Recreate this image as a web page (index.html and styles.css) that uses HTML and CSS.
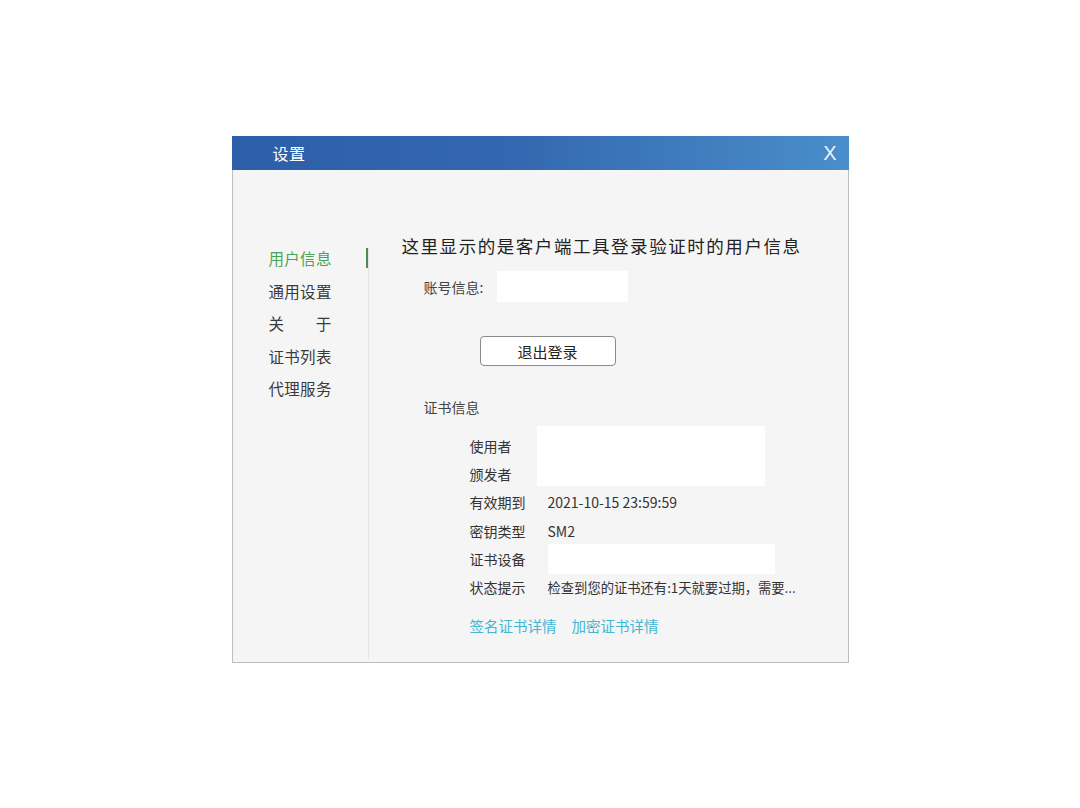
FILE: index.html
```html
<!DOCTYPE html>
<html lang="zh-CN">
<head>
<meta charset="utf-8">
<title>设置</title>
<link rel="stylesheet" href="styles.css">
</head>
<body>
<div class="dialog">
  <div class="titlebar">
    <span class="title">设置</span>
    <span class="close">X</span>
  </div>
  <div class="body">
    <aside class="side">
      <nav class="nav">
        <div class="nav-item active"><span>用户信息</span><i class="marker"></i></div>
        <div class="nav-item"><span>通用设置</span></div>
        <div class="nav-item"><span class="justify"><span>关</span><span>于</span></span></div>
        <div class="nav-item"><span>证书列表</span></div>
        <div class="nav-item"><span>代理服务</span></div>
      </nav>
    </aside>
    <main class="main">
      <h1 class="heading">这里显示的是客户端工具登录验证时的用户信息</h1>
      <div class="account">
        <span class="label">账号信息:</span>
        <span class="blank blank-account"></span>
      </div>
      <button class="btn">退出登录</button>
      <div class="section">证书信息</div>
      <div class="cert">
        <span class="k">使用者</span>
        <span class="blank blank-owner"></span>
        <span class="k">颁发者</span>
        <span class="k">有效期到</span><span class="v">2021-10-15 23:59:59</span>
        <span class="k">密钥类型</span><span class="v">SM2</span>
        <span class="k">证书设备</span><span class="v"><span class="blank blank-device"></span></span>
        <span class="k">状态提示</span><span class="v status">检查到您的证书还有:1天就要过期，需要...</span>
      </div>
      <div class="links">
        <a class="link">签名证书详情</a>
        <a class="link">加密证书详情</a>
      </div>
    </main>
  </div>
</div>
</body>
</html>
```

FILE: styles.css
```css
* { box-sizing: border-box; }
html, body { margin: 0; padding: 0; background: #ffffff; }
body {
  font-family: "Noto Sans CJK SC", "Noto Sans", sans-serif;
  color: #333;
}
.dialog {
  width: 617px;
  height: 527px;
  margin: 136px auto 0;
  display: flex;
  flex-direction: column;
}
.titlebar {
  height: 34px;
  flex: none;
  display: flex;
  align-items: center;
  justify-content: space-between;
  padding: 0 12px 0 41px;
  background: linear-gradient(90deg, #2d5fa8 0%, #3367af 45%, #4a8ecb 100%);
  color: #fff;
}
.title { font-size: 16px; line-height: 20px; letter-spacing: 0.5px; }
.close {
  font-family: "Liberation Sans", "DejaVu Sans", sans-serif;
  font-size: 20px;
  line-height: 20px;
  color: #eaf2fb;
}
.body {
  flex: 1;
  display: flex;
  background: #f5f5f5;
  border: 1px solid #bdbdbd;
  border-top: none;
}
.side {
  width: 136px;
  flex: none;
  display: flex;
  flex-direction: column;
  padding-top: 78px;
  padding-bottom: 3px;
}
.nav {
  flex: 1;
  border-right: 1px solid #e3e3e3;
}
.nav-item {
  height: 32.5px;
  display: flex;
  align-items: center;
  justify-content: space-between;
  padding-left: 36px;
  font-size: 15.5px;
  letter-spacing: 0.3px;
  color: #3a3a3a;
}
.nav-item:first-child { margin-top: -6px; }
.nav-item.active { color: #4aa454; }
.marker {
  width: 2px;
  height: 20px;
  background: #4f8a55;
  align-self: flex-start;
  margin-top: 6px;
}
.justify {
  width: 63px;
  display: flex;
  justify-content: space-between;
}
.main {
  flex: 1;
  padding: 64px 0 0 33px;
}
.heading {
  margin: 0;
  font-size: 17.5px;
  font-weight: normal;
  line-height: 24px;
  letter-spacing: 1.55px;
  color: #222;
}
.account {
  margin: 13px 0 0 22px;
  height: 31px;
  display: flex;
  align-items: center;
  gap: 14px;
}
.label { font-size: 14px; color: #444; }
.blank { background: #ffffff; display: block; }
.blank-account { width: 131px; height: 31px; }
.btn {
  display: block;
  margin: 34px 0 0 78px;
  width: 136px;
  height: 30px;
  border: 1px solid #8a8a8a;
  border-radius: 4px;
  background: #fff;
  font-family: inherit;
  font-size: 15px;
  color: #222;
  padding: 0;
}
.section {
  margin: 31px 0 0 22px;
  font-size: 14px;
  line-height: 20px;
  color: #444;
}
.cert {
  margin: 15px 0 0 68px;
  display: grid;
  grid-template-columns: 67px 240px;
  grid-auto-rows: 28.2px;
  align-items: center;
  font-size: 14px;
}
.k { color: #333; grid-column: 1; }
.v { color: #333; grid-column: 2; padding-left: 11px; }
.blank-owner {
  grid-column: 2;
  grid-row: 1 / span 2;
  align-self: start;
  width: 228px;
  height: 60px;
  margin-top: -6px;
}
.blank-device { width: 227px; height: 30px; }
.status { font-size: 13.3px; white-space: nowrap; color: #333; }
.links {
  margin: 15px 0 0 68px;
  display: flex;
  gap: 15px;
  font-size: 14.5px;
  line-height: 20px;
}
.link { color: #43b5d2; }
```
